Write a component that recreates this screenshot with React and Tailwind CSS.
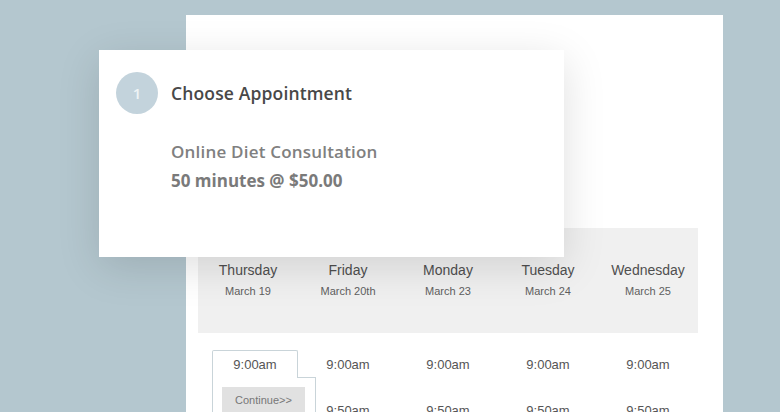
import React from "react"

const days = [
  { name: "Thursday", date: "March 19" },
  { name: "Friday", date: "March 20th" },
  { name: "Monday", date: "March 23" },
  { name: "Tuesday", date: "March 24" },
  { name: "Wednesday", date: "March 25" },
]

export default function App() {
  return (
    <div className="relative h-[412px] w-[780px] overflow-hidden bg-[#b4c7cf]">
      {/* Back panel with schedule */}
      <div className="ml-[186px] mt-[15px] h-[420px] w-[537px] bg-white pl-3 pt-[213px] font-['Liberation_Sans',Arial,sans-serif]">
        <div className="grid h-[105px] w-[500px] grid-cols-5 bg-[#f0f0f0] pt-[33px]">
          {days.map((d) => (
            <div key={d.name} className="flex flex-col items-center">
              <div className="text-[14px] leading-[18px] text-[#4f4f4f]">{d.name}</div>
              <div className="mt-[5px] text-[11px] leading-[14px] text-[#5f5f5f]">{d.date}</div>
            </div>
          ))}
        </div>

        <div className="grid w-[500px] grid-cols-5 pt-[17px] text-[13px] text-[#555]">
          {/* Selected slot */}
          <div className="relative pl-[14px]">
            <div className="relative z-10 -mb-px flex h-[28px] items-center justify-center rounded-t-[2px] border border-b-0 border-[#c9d4d9] bg-white pt-[1px]">
              9:00am
            </div>
            <div className="h-[60px] w-[104px] border border-[#c9d4d9] bg-white pl-[9px] pt-[9px]">
              <div className="flex h-[27px] w-[83px] items-center justify-center bg-[#e1e1e1] text-[11px] text-[#777]">
                Continue&gt;&gt;
              </div>
            </div>
          </div>
          {days.slice(1).map((d) => (
            <div key={d.name} className="flex flex-col items-center">
              <div className="flex h-[28px] items-center pt-[1px]">9:00am</div>
              <div className="mt-[23px]">9:50am</div>
            </div>
          ))}
        </div>
      </div>

      {/* Floating step card */}
      <div className="absolute left-[99px] top-[50px] h-[207px] w-[465px] bg-white pl-[17px] pt-[22px] font-['Open_Sans',sans-serif] shadow-[0_10px_40px_rgba(0,0,0,0.13)]">
        <div className="flex items-center">
          <div className="flex h-[42px] w-[42px] items-center justify-center rounded-full bg-[#c3d3dc] text-[15px] font-semibold text-[#eef3f5]">
            1
          </div>
          <div className="ml-[13px] text-[17.5px] font-semibold tracking-[0.15px] text-[#484848]">Choose Appointment</div>
        </div>
        <div className="ml-[55px] mt-[27px] text-[17px] font-semibold leading-[22px] tracking-[0.2px] text-[#808080]">
          Online Diet Consultation
        </div>
        <div className="ml-[55px] mt-[8px] text-[17px] font-bold leading-[20px] text-[#7a7a7a]">
          50 minutes @ $50.00
        </div>
      </div>
    </div>
  )
}
